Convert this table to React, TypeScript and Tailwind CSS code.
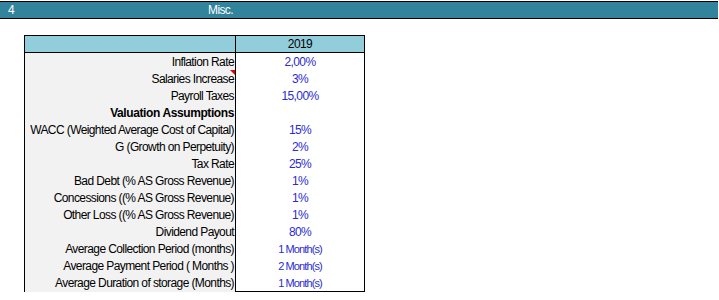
import React from "react";

type Row = { label: string; value: string; bold?: boolean; small?: boolean; note?: boolean };

const rows: Row[] = [
  { label: "Inflation Rate", value: "2,00%" },
  { label: "Salaries Increase", value: "3%", note: true },
  { label: "Payroll Taxes", value: "15,00%" },
  { label: "Valuation Assumptions", value: "", bold: true },
  { label: "WACC (Weighted Average Cost of Capital)", value: "15%" },
  { label: "G (Growth on Perpetuity)", value: "2%" },
  { label: "Tax Rate", value: "25%" },
  { label: "Bad Debt (% AS Gross Revenue)", value: "1%" },
  { label: "Concessions ((% AS Gross Revenue)", value: "1%" },
  { label: "Other Loss ((% AS Gross Revenue)", value: "1%" },
  { label: "Dividend Payout", value: "80%" },
  { label: "Average Collection Period (months)", value: "1 Month(s)", small: true },
  { label: "Average Payment Period ( Months )", value: "2 Month(s)", small: true },
  { label: "Average Duration of storage (Months)", value: "1 Month(s)", small: true },
];

export default function App() {
  return (
    <div className="w-[719px] h-[300px] bg-white font-['Liberation_Sans',Arial,sans-serif] text-[12px] overflow-hidden">
      {/* section bar */}
      <div className="mt-px h-[18px] w-[718px] bg-[#31849b] border-y border-black flex items-center text-white leading-none tracking-[-0.6px]">
        <span className="w-[208px] pl-[8px]">4</span>
        <span>Misc.</span>
      </div>

      {/* assumptions table */}
      <div className="ml-[24px] mt-[16px] w-[341px] border border-black">
        <div className="grid grid-cols-[211px_128px] h-[17px] bg-[#92cddc] border-b border-black leading-[17px]">
          <div className="border-r border-black" />
          <div className="text-center text-black tracking-[-0.6px]">2019</div>
        </div>
        {rows.map((r) => (
          <div key={r.label} className="grid grid-cols-[211px_128px] h-[17px] leading-[18px]">
            <div className="relative bg-[#f2f2f2] border-r border-black text-right pr-[1px] text-black tracking-[-0.6px] whitespace-nowrap">
              <span className={r.bold ? "font-bold tracking-[-0.4px]" : ""}>{r.label}</span>
              {r.note && (
                <span className="absolute right-0 top-0 w-0 h-0 border-l-[5px] border-l-transparent border-t-[5px] border-t-[#e00000]" />
              )}
            </div>
            <div
              className={
                r.small
                  ? "text-center text-[#2b2bd1] text-[11px] tracking-[-0.9px]"
                  : "text-center text-[#2b2bd1] tracking-[-0.6px]"
              }
            >
              {r.value}
            </div>
          </div>
        ))}
      </div>
    </div>
  );
}
